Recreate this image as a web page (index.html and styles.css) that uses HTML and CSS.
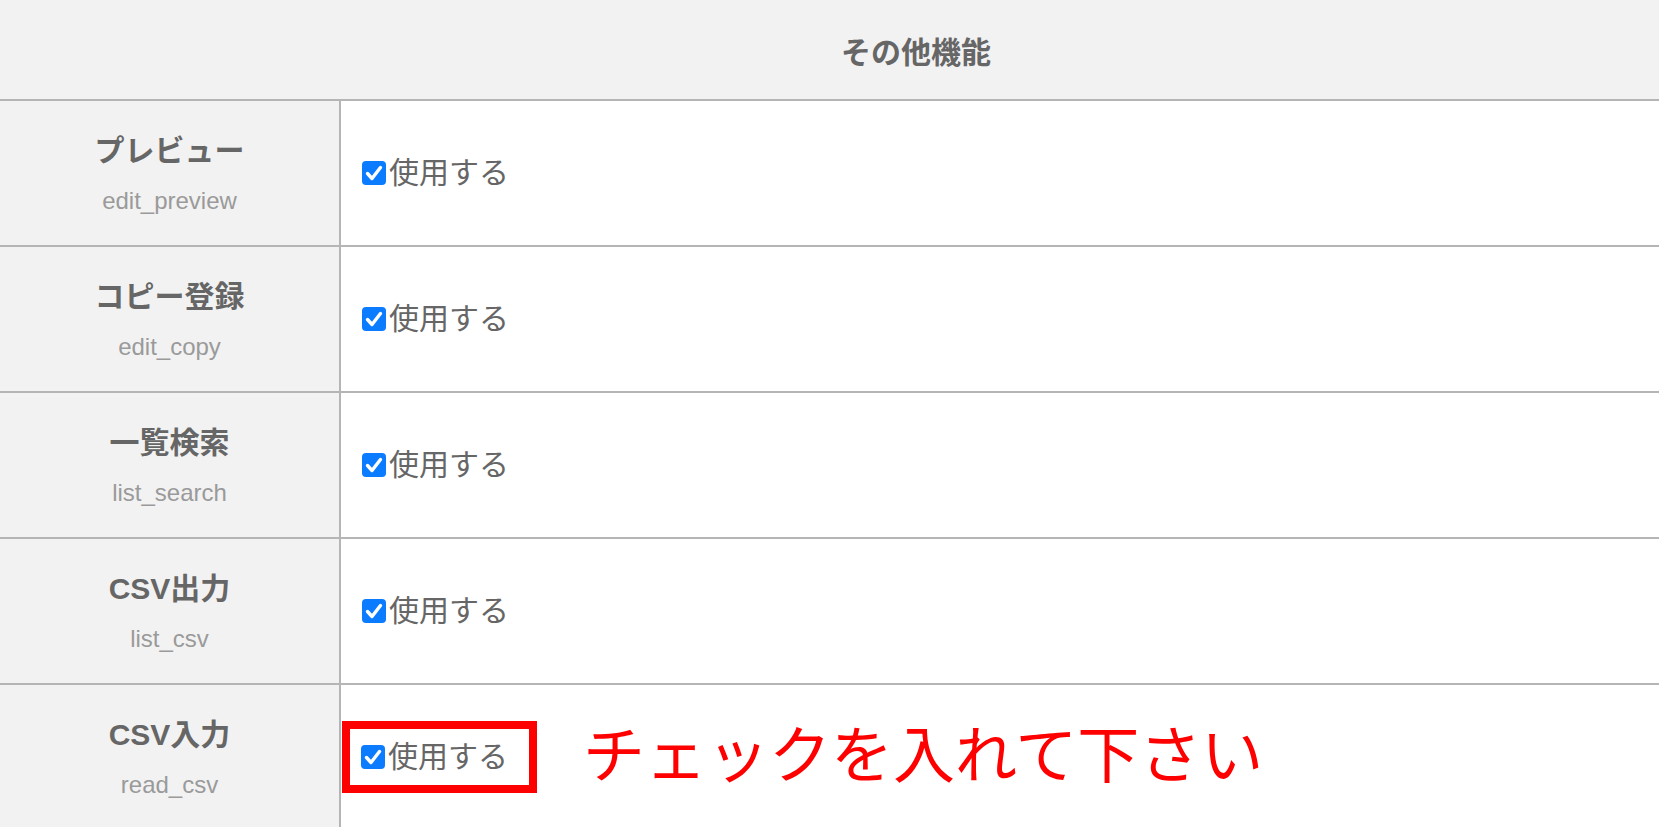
FILE: index.html
```html
<!DOCTYPE html>
<html lang="ja">
<head>
<meta charset="UTF-8" />
<meta name="viewport" content="width=device-width, initial-scale=1" />
<title>その他機能</title>
<link rel="stylesheet" href="styles.css">
</head>
<body>
  <div class="settings">
    <div class="head">その他機能</div>

    <div class="label">
      <span class="title">プレビュー</span>
      <span class="key">edit_preview</span>
    </div>
    <div class="value">
      <label class="check"><span class="box"><svg viewBox="0 0 24 24"><path d="M5.5 12.5l4.5 5 8.5-11" /></svg></span>使用する</label>
    </div>

    <div class="label">
      <span class="title">コピー登録</span>
      <span class="key">edit_copy</span>
    </div>
    <div class="value">
      <label class="check"><span class="box"><svg viewBox="0 0 24 24"><path d="M5.5 12.5l4.5 5 8.5-11" /></svg></span>使用する</label>
    </div>

    <div class="label">
      <span class="title">一覧検索</span>
      <span class="key">list_search</span>
    </div>
    <div class="value">
      <label class="check"><span class="box"><svg viewBox="0 0 24 24"><path d="M5.5 12.5l4.5 5 8.5-11" /></svg></span>使用する</label>
    </div>

    <div class="label">
      <span class="title">CSV出力</span>
      <span class="key">list_csv</span>
    </div>
    <div class="value">
      <label class="check"><span class="box"><svg viewBox="0 0 24 24"><path d="M5.5 12.5l4.5 5 8.5-11" /></svg></span>使用する</label>
    </div>

    <div class="label">
      <span class="title">CSV入力</span>
      <span class="key">read_csv</span>
    </div>
    <div class="value marked">
      <label class="check highlight"><span class="box"><svg viewBox="0 0 24 24"><path d="M5.5 12.5l4.5 5 8.5-11" /></svg></span>使用する</label>
      <span class="note">チェックを入れて下さい</span>
    </div>
  </div>
</body>
</html>
```

FILE: styles.css
```css
body {
  margin: 0;
  overflow: hidden;
  font-family: "Liberation Sans", "Noto Sans CJK JP", sans-serif;
  color: #666;
  background: #fff;
}
.settings {
  display: grid;
  grid-template-columns: 341px 1fr;
  grid-template-rows: 101px;
  grid-auto-rows: 146px;
}
.head {
  grid-column: 1 / 3;
  display: flex;
  align-items: center;
  justify-content: center;
  padding-left: 173px;
  background: #f2f2f2;
  border-bottom: 2px solid #b5b5b5;
  font-size: 30px;
  font-weight: 700;
  color: #666;
}
.label {
  background: #f2f2f2;
  border-right: 2px solid #b5b5b5;
  border-bottom: 2px solid #b5b5b5;
  display: flex;
  flex-direction: column;
  align-items: center;
  justify-content: center;
}
.title {
  font-size: 30px;
  line-height: 44px;
  font-weight: 700;
  color: #666;
}
.key {
  margin-top: 11px;
  font-size: 24px;
  line-height: 34px;
  color: #9a9a9a;
}
.value {
  border-bottom: 2px solid #b5b5b5;
  display: flex;
  align-items: center;
  padding-left: 21px;
}
.value.marked {
  padding-left: 1px;
}
.check {
  display: flex;
  align-items: center;
  gap: 3px;
  font-size: 30px;
  line-height: 44px;
  color: #666;
}
.box {
  width: 24px;
  height: 24px;
  border-radius: 4px;
  background: #0b7bff;
  display: flex;
}
.box svg {
  width: 24px;
  height: 24px;
  fill: none;
  stroke: #fff;
  stroke-width: 3.4;
  stroke-linecap: round;
  stroke-linejoin: round;
}
.highlight {
  border: 8px solid #ff0000;
  padding: 6px 21px 6px 11px;
}
.note {
  margin-left: 46px;
  font-size: 62px;
  color: #ff0000;
  line-height: 72px;
}
```
